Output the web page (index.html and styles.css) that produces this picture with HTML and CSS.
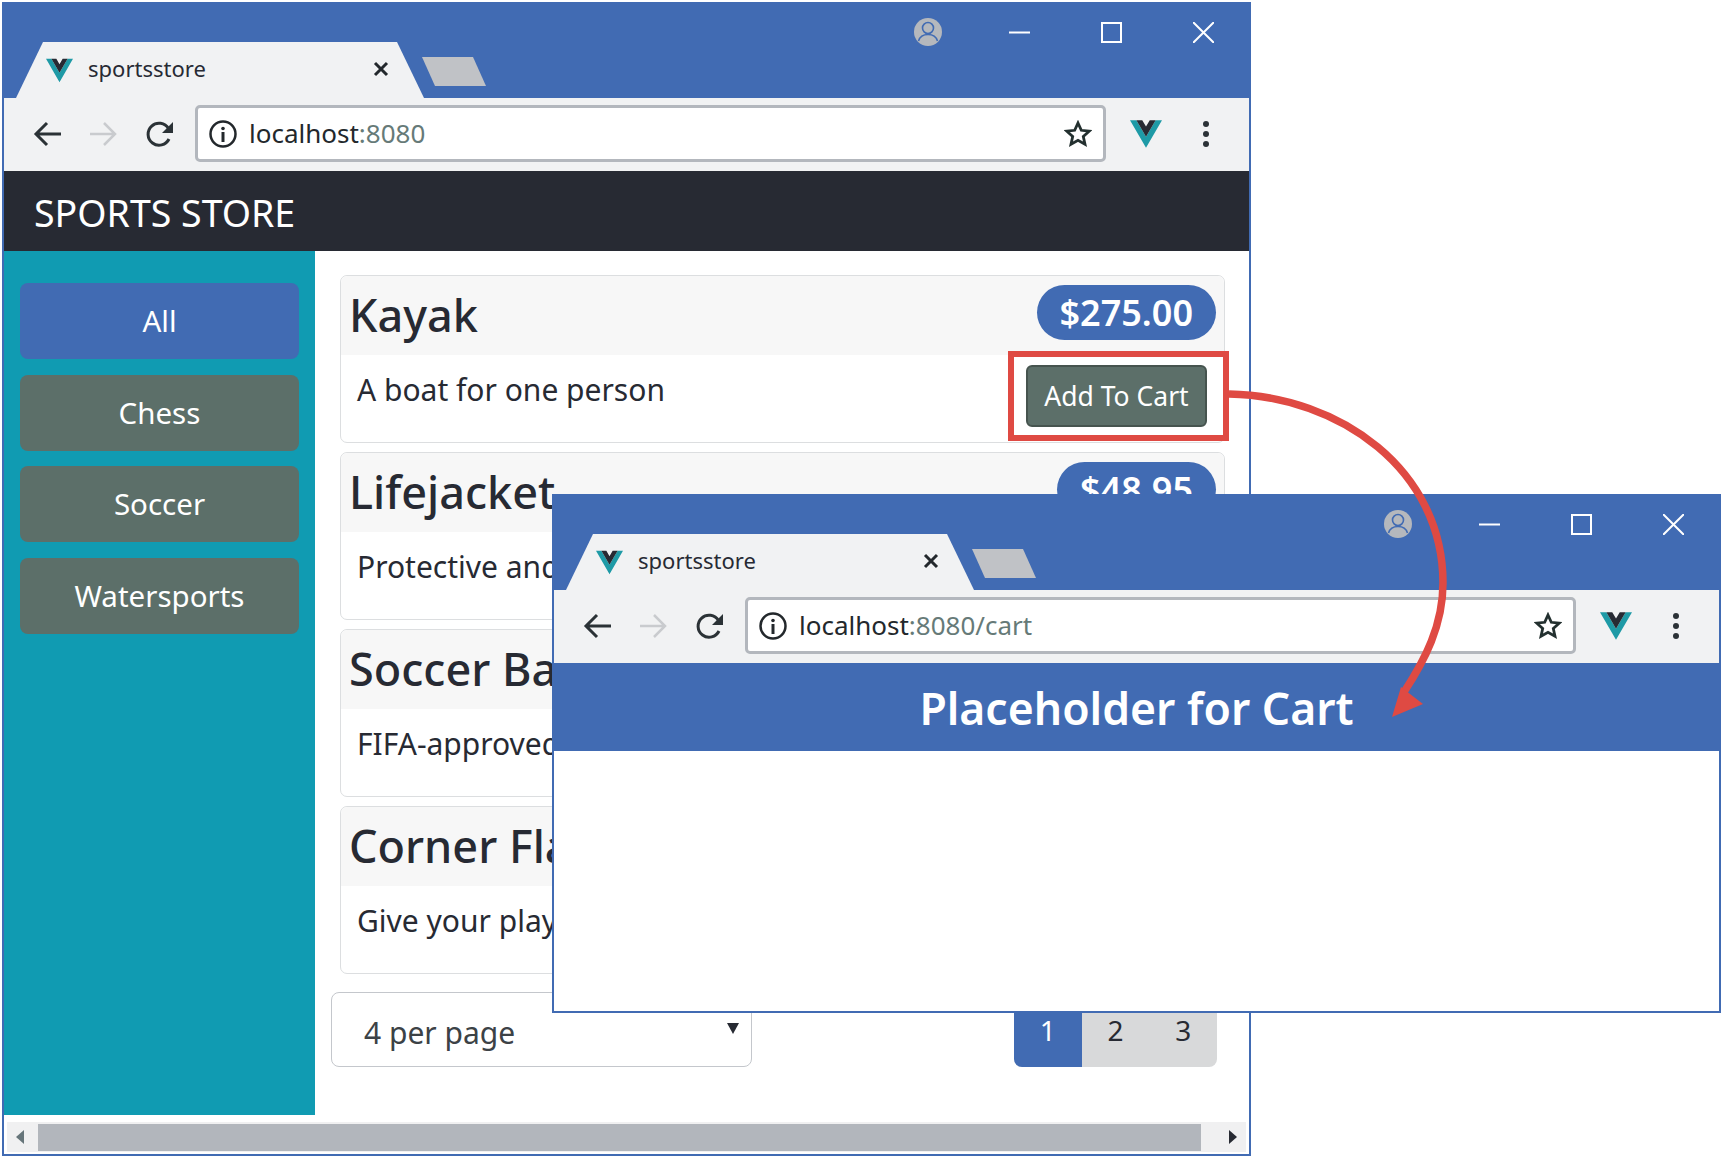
FILE: index.html
```html
<!DOCTYPE html>
<html lang="en">

<head>
    <meta name="viewport" content="width=device-width, initial-scale=1.0" />
    <title>sportsstore</title>
    <link rel="stylesheet" href="styles.css">
</head>

<body>
    <!-- shared browser icons -->
    <svg class="sprites" width="0" height="0">
        <symbol id="vue" viewBox="0 0 256 221">
            <path fill="#1e9aa6" d="M0 0l128 221L256 0h-51L128 133 51 0z" />
            <path fill="#272a33" d="M51 0l77 133L205 0h-47l-30 51L98 0z" />
        </symbol>
        <symbol id="profile" viewBox="0 0 28 28">
            <circle cx="14" cy="14" r="14" fill="#b5b8bd" />
            <circle cx="14" cy="10" r="5.5" fill="#b5b8bd" stroke="#416bb3" stroke-width="1.6" />
            <path d="M4.5 23c1.5-5 5-6.500 9.500-6.500s8 1.500 9.500 6.500" fill="none" stroke="#416bb3" stroke-width="1.6" />
        </symbol>
        <symbol id="back" viewBox="0 0 29 26">
            <path d="M28 13H3M14 2L3 13l11 11" fill="none" stroke="#2b3236" stroke-width="3" />
        </symbol>
        <symbol id="forward" viewBox="0 0 29 26">
            <path d="M1 13h25M15 2l11 11-11 11" fill="none" stroke="#c9cbce" stroke-width="2.500" />
        </symbol>
        <symbol id="reload" viewBox="0 0 28 28">
            <path d="M23 19a11 11 0 1 1-.5-10.500" fill="none" stroke="#2b3236" stroke-width="3" />
            <path d="M27 2v11H16z" fill="#2b3236" />
        </symbol>
        <symbol id="info" viewBox="0 0 28 28">
            <circle cx="14" cy="14" r="12.500" fill="none" stroke="#23282c" stroke-width="2.500" />
            <circle cx="14" cy="8.500" r="1.800" fill="#23282c" />
            <path d="M14 12v10" stroke="#23282c" stroke-width="3" />
        </symbol>
        <symbol id="star" viewBox="0 0 28 28">
            <path d="M14 3l3.300 7.300 7.900.9-5.900 5.300 1.700 7.800-7-4-7 4 1.700-7.800-5.900-5.300 7.900-.9z" fill="#fff" stroke="#23302f" stroke-width="2.800" />
        </symbol>
    </svg>

    <div class="window window-store">
        <div class="titlebar">
            <div class="tabs">
                <div class="tab">
                    <svg class="tab-logo"><use href="#vue" /></svg>
                    <span class="tab-title">sportsstore</span>
                    <svg class="tab-close" viewBox="0 0 16 16"><path d="M2 2l12 12M14 2L2 14" /></svg>
                </div>
                <div class="new-tab"></div>
            </div>
            <div class="controls">
                <svg class="ctl-profile"><use href="#profile" /></svg>
                <svg class="ctl ctl-min" viewBox="0 0 21 21"><path d="M0 10.500h21" /></svg>
                <svg class="ctl ctl-max" viewBox="0 0 21 21"><path d="M1 1h19v19H1z" /></svg>
                <svg class="ctl ctl-close" viewBox="0 0 21 21"><path d="M0 0l21 21M21 0L0 21" /></svg>
            </div>
        </div>
        <div class="toolbar">
            <svg class="nav-back"><use href="#back" /></svg>
            <svg class="nav-forward"><use href="#forward" /></svg>
            <svg class="nav-reload"><use href="#reload" /></svg>
            <div class="address">
                <svg class="addr-info"><use href="#info" /></svg>
                <span class="addr-url">localhost<span class="addr-dim">:8080</span></span>
                <svg class="addr-star"><use href="#star" /></svg>
            </div>
            <svg class="ext-logo"><use href="#vue" /></svg>
            <div class="dots"><i></i><i></i><i></i></div>
        </div>

        <div class="navbar">SPORTS STORE</div>
        <div class="layout">
            <div class="sidebar">
                <div class="cat cat-active">All</div>
                <div class="cat">Chess</div>
                <div class="cat">Soccer</div>
                <div class="cat">Watersports</div>
            </div>
            <div class="main">
                <div class="card">
                    <div class="card-head">
                        <h4>Kayak</h4>
                        <span class="price">$275.00</span>
                    </div>
                    <div class="card-body">
                        <p>A boat for one person</p>
                        <div class="add-btn add-btn-marked">Add To Cart</div>
                    </div>
                </div>
                <div class="card">
                    <div class="card-head">
                        <h4>Lifejacket</h4>
                        <span class="price">$48.95</span>
                    </div>
                    <div class="card-body">
                        <p>Protective and fashionable</p>
                        <div class="add-btn">Add To Cart</div>
                    </div>
                </div>
                <div class="card">
                    <div class="card-head">
                        <h4>Soccer Ball</h4>
                        <span class="price">$19.50</span>
                    </div>
                    <div class="card-body">
                        <p>FIFA-approved size and weight</p>
                        <div class="add-btn">Add To Cart</div>
                    </div>
                </div>
                <div class="card">
                    <div class="card-head">
                        <h4>Corner Flags</h4>
                        <span class="price">$34.95</span>
                    </div>
                    <div class="card-body">
                        <p>Give your playing field a professional touch</p>
                        <div class="add-btn">Add To Cart</div>
                    </div>
                </div>
                <div class="pager-row">
                    <div class="per-page">4 per page<span class="caret"></span></div>
                    <div class="pages">
                        <span class="page page-active">1</span>
                        <span class="page">2</span>
                        <span class="page">3</span>
                    </div>
                </div>
            </div>
        </div>
        <div class="scrollbar">
            <div class="scroll-btn scroll-left"><span class="tri-left"></span></div>
            <div class="scroll-thumb"></div>
            <div class="scroll-btn scroll-right"><span class="tri-right"></span></div>
        </div>
    </div>

    <div class="window window-cart">
        <div class="titlebar">
            <div class="tabs">
                <div class="tab">
                    <svg class="tab-logo"><use href="#vue" /></svg>
                    <span class="tab-title">sportsstore</span>
                    <svg class="tab-close" viewBox="0 0 16 16"><path d="M2 2l12 12M14 2L2 14" /></svg>
                </div>
                <div class="new-tab"></div>
            </div>
            <div class="controls">
                <svg class="ctl-profile"><use href="#profile" /></svg>
                <svg class="ctl ctl-min" viewBox="0 0 21 21"><path d="M0 10.500h21" /></svg>
                <svg class="ctl ctl-max" viewBox="0 0 21 21"><path d="M1 1h19v19H1z" /></svg>
                <svg class="ctl ctl-close" viewBox="0 0 21 21"><path d="M0 0l21 21M21 0L0 21" /></svg>
            </div>
        </div>
        <div class="toolbar">
            <svg class="nav-back"><use href="#back" /></svg>
            <svg class="nav-forward"><use href="#forward" /></svg>
            <svg class="nav-reload"><use href="#reload" /></svg>
            <div class="address">
                <svg class="addr-info"><use href="#info" /></svg>
                <span class="addr-url">localhost<span class="addr-dim">:8080/cart</span></span>
                <svg class="addr-star"><use href="#star" /></svg>
            </div>
            <svg class="ext-logo"><use href="#vue" /></svg>
            <div class="dots"><i></i><i></i><i></i></div>
        </div>
        <h3 class="cart-title">Placeholder for Cart</h3>
    </div>

    <!-- callout arrow between the two windows -->
    <svg class="callout" viewBox="0 0 1725 1161">
        <path d="M1229 394C1340 396 1443 470 1443 583C1443 625 1425 660 1404 692" fill="none" stroke="#df4a43" stroke-width="7.500" />
        <path d="M1392 717L1401 687L1423 704Z" fill="#df4a43" />
    </svg>
</body>

</html>
```

FILE: styles.css
```css
body {
    margin: 0;
    width: 1725px;
    height: 1161px;
    overflow: hidden;
    position: relative;
    background-color: #fff;
    font-family: "Noto Sans", Arial, sans-serif;
    color: #272a33;
}

.sprites {
    position: absolute;
}

/* windows sit on a free canvas */
.window {
    position: absolute;
    box-sizing: border-box;
    display: flex;
    flex-direction: column;
    overflow: hidden;
    background-color: #fff;
    border: 2px solid #416bb3;
    border-top: none;
}

.window-store {
    left: 2px;
    top: 2px;
    width: 1249px;
    height: 1154px;
}

.window-cart {
    left: 552px;
    top: 494px;
    width: 1169px;
    height: 519px;
}

/* title bar */
.titlebar {
    flex: none;
    height: 96px;
    display: flex;
    justify-content: space-between;
    background-color: #416bb3;
}

.tabs {
    display: flex;
    align-items: flex-end;
    margin-left: 12px;
}

.tab {
    box-sizing: border-box;
    width: 408px;
    height: 56px;
    display: flex;
    align-items: center;
    padding-left: 30px;
    background-color: #f1f2f3;
    clip-path: polygon(27px 0, 381px 0, 100% 100%, 0 100%);
}

.tab-logo {
    width: 27px;
    height: 25px;
    margin-right: 15px;
}

.tab-title {
    width: 285px;
    margin-top: -4px;
    font-size: 22px;
    line-height: 28px;
}

.tab-close {
    width: 16px;
    height: 16px;
    margin-top: -2px;
}

.tab-close path {
    fill: none;
    stroke: #23282c;
    stroke-width: 3;
}

.new-tab {
    width: 64px;
    height: 29px;
    margin: 0 0 12px -2px;
    background-color: #c0c2c6;
    clip-path: polygon(0 0, 51px 0, 100% 100%, 13px 100%);
}

.controls {
    display: flex;
    align-items: center;
    height: 28px;
    padding: 16px 35px 0 0;
}

.ctl-profile {
    width: 28px;
    height: 28px;
    margin-right: 67px;
}

.ctl {
    width: 21px;
    height: 21px;
    margin-left: 71px;
}

.ctl-min {
    margin-left: 0;
}

.ctl path {
    fill: none;
    stroke: #fff;
    stroke-width: 2;
}

/* toolbar */
.toolbar {
    flex: none;
    box-sizing: border-box;
    height: 73px;
    display: flex;
    align-items: center;
    padding: 0 0 2px 29px;
    background-color: #f1f2f3;
}

.nav-back,
.nav-forward {
    width: 29px;
    height: 26px;
}

.nav-forward {
    margin-left: 27px;
}

.nav-reload {
    width: 28px;
    height: 28px;
    margin-left: 28px;
}

.address {
    flex: 1;
    box-sizing: border-box;
    height: 57px;
    display: flex;
    align-items: center;
    margin-left: 21px;
    padding: 0 11px 0 11px;
    background-color: #fff;
    border: 3px solid #b3b7bd;
    border-radius: 5px;
}

.addr-info {
    width: 28px;
    height: 28px;
    margin-right: 12px;
}

.addr-url {
    flex: 1;
    margin-top: -2px;
    font-size: 26px;
    color: #23282c;
}

.addr-dim {
    color: #667a78;
}

.addr-star {
    width: 28px;
    height: 28px;
}

.ext-logo {
    width: 32px;
    height: 28px;
    margin-left: 24px;
}

.dots {
    display: flex;
    flex-direction: column;
    gap: 4px;
    margin: 0 40px 0 41px;
}

.dots i {
    width: 6px;
    height: 6px;
    border-radius: 50%;
    background-color: #2b3236;
}

/* store page */
.navbar {
    flex: none;
    height: 80px;
    line-height: 84px;
    padding-left: 30px;
    font-size: 37.500px;
    color: #fff;
    background-color: #272a33;
}

.layout {
    flex: none;
    height: 864px;
    display: flex;
}

.sidebar {
    box-sizing: border-box;
    width: 311px;
    display: flex;
    flex-direction: column;
    gap: 15.500px;
    padding: 32px 16px 0;
    background-color: #109bb2;
}

.cat {
    height: 76px;
    line-height: 76px;
    text-align: center;
    font-size: 29.500px;
    color: #fff;
    background-color: #5c6f69;
    border-radius: 8px;
}

.cat-active {
    background-color: #416bb3;
}

.main {
    flex: 1;
    box-sizing: border-box;
    display: flex;
    flex-direction: column;
    gap: 9px;
    padding: 24px 24px 0 25px;
}

.card {
    box-sizing: border-box;
    height: 168px;
    border: 1px solid #dcdee0;
    border-radius: 7px;
    overflow: visible;
}

.card-head {
    box-sizing: border-box;
    height: 79px;
    display: flex;
    justify-content: space-between;
    align-items: flex-start;
    padding: 9px 8px 0 8px;
    background-color: #f7f7f7;
    border-radius: 7px 7px 0 0;
}

.card-head h4 {
    margin: 0;
    font-size: 45px;
    line-height: 60px;
    font-weight: 500;
}

.price {
    height: 55px;
    line-height: 55px;
    padding: 0 23px;
    font-size: 36px;
    font-weight: 600;
    color: #fff;
    background-color: #416bb3;
    border-radius: 28px;
}

.card-body {
    display: flex;
    justify-content: space-between;
    align-items: flex-start;
    padding: 10px 17px 0 16px;
}

.card-body p {
    margin: 0;
    padding-top: 4px;
    font-size: 30px;
    line-height: 42px;
}

.add-btn {
    position: relative;
    box-sizing: border-box;
    width: 181px;
    height: 62px;
    line-height: 58px;
    text-align: center;
    font-size: 26.500px;
    color: #fff;
    background-color: #5c6f69;
    border: 2px solid #46544f;
    border-radius: 6px;
}

/* red marker around the first button */
.add-btn-marked::after {
    content: "";
    position: absolute;
    left: -20px;
    top: -16px;
    right: -24px;
    bottom: -16px;
    border: 6px solid #df4a43;
}

.pager-row {
    display: flex;
    justify-content: space-between;
    margin: 9px 8px 0 -9px;
}

.per-page {
    position: relative;
    box-sizing: border-box;
    width: 421px;
    height: 75px;
    line-height: 80px;
    padding-left: 32px;
    font-size: 30px;
    color: #3c4246;
    border: 1px solid #c4c7cc;
    border-radius: 8px;
}

/* select arrow */
.caret {
    position: absolute;
    top: 30px;
    right: 12px;
    border-style: solid;
    border-width: 11px 6px 0;
    border-color: #272a33 transparent transparent;
}

.pages {
    width: 203px;
    height: 75px;
    display: flex;
    overflow: hidden;
    border-radius: 8px;
    background-color: #d8d9da;
}

.page {
    flex: 1;
    text-align: center;
    line-height: 76px;
    font-size: 28px;
}

.page-active {
    color: #fff;
    background-color: #416bb3;
}

.scrollbar {
    flex: none;
    height: 30px;
    display: flex;
    margin: 7px 3px 0;
    background-color: #f0f0f1;
}

.scroll-btn {
    display: flex;
    align-items: center;
    justify-content: center;
}

.scroll-left {
    box-sizing: border-box;
    width: 31px;
    padding-right: 5px;
}

.scroll-right {
    box-sizing: border-box;
    width: 45px;
    padding-left: 18px;
}

.scroll-thumb {
    flex: 1;
    margin: 2px 0 1px;
    background-color: #b2b6bc;
}

.tri-left {
    border-style: solid;
    border-width: 7px 8px 7px 0;
    border-color: transparent #66757a transparent transparent;
}

.tri-right {
    border-style: solid;
    border-width: 7px 0 7px 8px;
    border-color: transparent transparent transparent #272a33;
}

/* cart page */
.cart-title {
    flex: none;
    height: 88px;
    margin: 0;
    line-height: 90px;
    text-align: center;
    font-size: 44.500px;
    font-weight: 600;
    color: #fff;
    background-color: #416bb3;
}

.callout {
    position: absolute;
    left: 0;
    top: 0;
    width: 1725px;
    height: 1161px;
}
```
